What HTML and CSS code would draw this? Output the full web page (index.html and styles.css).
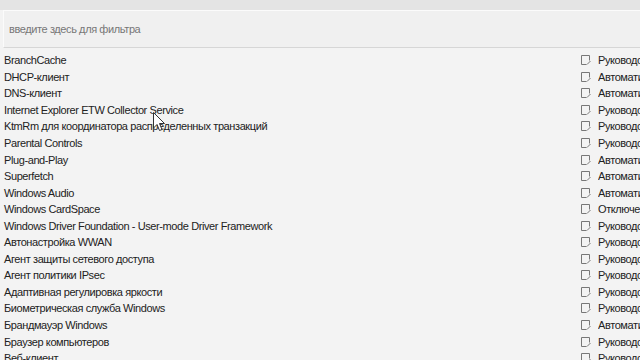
FILE: index.html
```html
<!DOCTYPE html>
<html>
<head>
<meta charset="utf-8">
<link rel="stylesheet" href="styles.css">
</head>
<body>
<div class="topbar"></div>
<div class="filter"><span class="placeholder">введите здесь для фильтра</span></div>
<div class="list">
  <div class="row"><span class="name">BranchCache</span><span class="start"><svg class="ico" viewBox="0 0 10 10"><path d="M0.5 0.5H8.5V5.5M5.5 9.5H0.5V0.5" fill="none" stroke="#777"/><path d="M6 9.5L9.5 6" stroke="#777"/></svg><span class="stxt">Руководство</span></span></div>
  <div class="row"><span class="name">DHCP-клиент</span><span class="start"><svg class="ico" viewBox="0 0 10 10"><path d="M0.5 0.5H8.5V5.5M5.5 9.5H0.5V0.5" fill="none" stroke="#777"/><path d="M6 9.5L9.5 6" stroke="#777"/></svg><span class="stxt">Автоматически</span></span></div>
  <div class="row"><span class="name">DNS-клиент</span><span class="start"><svg class="ico" viewBox="0 0 10 10"><path d="M0.5 0.5H8.5V5.5M5.5 9.5H0.5V0.5" fill="none" stroke="#777"/><path d="M6 9.5L9.5 6" stroke="#777"/></svg><span class="stxt">Автоматически</span></span></div>
  <div class="row"><span class="name">Internet Explorer ETW Collector Service</span><span class="start"><svg class="ico" viewBox="0 0 10 10"><path d="M0.5 0.5H8.5V5.5M5.5 9.5H0.5V0.5" fill="none" stroke="#777"/><path d="M6 9.5L9.5 6" stroke="#777"/></svg><span class="stxt">Руководство</span></span></div>
  <div class="row"><span class="name">KtmRm для координатора распределенных транзакций</span><span class="start"><svg class="ico" viewBox="0 0 10 10"><path d="M0.5 0.5H8.5V5.5M5.5 9.5H0.5V0.5" fill="none" stroke="#777"/><path d="M6 9.5L9.5 6" stroke="#777"/></svg><span class="stxt">Руководство</span></span></div>
  <div class="row"><span class="name">Parental Controls</span><span class="start"><svg class="ico" viewBox="0 0 10 10"><path d="M0.5 0.5H8.5V5.5M5.5 9.5H0.5V0.5" fill="none" stroke="#777"/><path d="M6 9.5L9.5 6" stroke="#777"/></svg><span class="stxt">Руководство</span></span></div>
  <div class="row"><span class="name">Plug-and-Play</span><span class="start"><svg class="ico" viewBox="0 0 10 10"><path d="M0.5 0.5H8.5V5.5M5.5 9.5H0.5V0.5" fill="none" stroke="#777"/><path d="M6 9.5L9.5 6" stroke="#777"/></svg><span class="stxt">Автоматически</span></span></div>
  <div class="row"><span class="name">Superfetch</span><span class="start"><svg class="ico" viewBox="0 0 10 10"><path d="M0.5 0.5H8.5V5.5M5.5 9.5H0.5V0.5" fill="none" stroke="#777"/><path d="M6 9.5L9.5 6" stroke="#777"/></svg><span class="stxt">Автоматически</span></span></div>
  <div class="row"><span class="name">Windows Audio</span><span class="start"><svg class="ico" viewBox="0 0 10 10"><path d="M0.5 0.5H8.5V5.5M5.5 9.5H0.5V0.5" fill="none" stroke="#777"/><path d="M6 9.5L9.5 6" stroke="#777"/></svg><span class="stxt">Автоматически</span></span></div>
  <div class="row"><span class="name">Windows CardSpace</span><span class="start"><svg class="ico" viewBox="0 0 10 10"><path d="M0.5 0.5H8.5V5.5M5.5 9.5H0.5V0.5" fill="none" stroke="#777"/><path d="M6 9.5L9.5 6" stroke="#777"/></svg><span class="stxt">Отключена</span></span></div>
  <div class="row"><span class="name">Windows Driver Foundation - User-mode Driver Framework</span><span class="start"><svg class="ico" viewBox="0 0 10 10"><path d="M0.5 0.5H8.5V5.5M5.5 9.5H0.5V0.5" fill="none" stroke="#777"/><path d="M6 9.5L9.5 6" stroke="#777"/></svg><span class="stxt">Руководство</span></span></div>
  <div class="row"><span class="name">Автонастройка WWAN</span><span class="start"><svg class="ico" viewBox="0 0 10 10"><path d="M0.5 0.5H8.5V5.5M5.5 9.5H0.5V0.5" fill="none" stroke="#777"/><path d="M6 9.5L9.5 6" stroke="#777"/></svg><span class="stxt">Руководство</span></span></div>
  <div class="row"><span class="name">Агент защиты сетевого доступа</span><span class="start"><svg class="ico" viewBox="0 0 10 10"><path d="M0.5 0.5H8.5V5.5M5.5 9.5H0.5V0.5" fill="none" stroke="#777"/><path d="M6 9.5L9.5 6" stroke="#777"/></svg><span class="stxt">Руководство</span></span></div>
  <div class="row"><span class="name">Агент политики IPsec</span><span class="start"><svg class="ico" viewBox="0 0 10 10"><path d="M0.5 0.5H8.5V5.5M5.5 9.5H0.5V0.5" fill="none" stroke="#777"/><path d="M6 9.5L9.5 6" stroke="#777"/></svg><span class="stxt">Руководство</span></span></div>
  <div class="row"><span class="name">Адаптивная регулировка яркости</span><span class="start"><svg class="ico" viewBox="0 0 10 10"><path d="M0.5 0.5H8.5V5.5M5.5 9.5H0.5V0.5" fill="none" stroke="#777"/><path d="M6 9.5L9.5 6" stroke="#777"/></svg><span class="stxt">Руководство</span></span></div>
  <div class="row"><span class="name">Биометрическая служба Windows</span><span class="start"><svg class="ico" viewBox="0 0 10 10"><path d="M0.5 0.5H8.5V5.5M5.5 9.5H0.5V0.5" fill="none" stroke="#777"/><path d="M6 9.5L9.5 6" stroke="#777"/></svg><span class="stxt">Руководство</span></span></div>
  <div class="row"><span class="name">Брандмауэр Windows</span><span class="start"><svg class="ico" viewBox="0 0 10 10"><path d="M0.5 0.5H8.5V5.5M5.5 9.5H0.5V0.5" fill="none" stroke="#777"/><path d="M6 9.5L9.5 6" stroke="#777"/></svg><span class="stxt">Автоматически</span></span></div>
  <div class="row"><span class="name">Браузер компьютеров</span><span class="start"><svg class="ico" viewBox="0 0 10 10"><path d="M0.5 0.5H8.5V5.5M5.5 9.5H0.5V0.5" fill="none" stroke="#777"/><path d="M6 9.5L9.5 6" stroke="#777"/></svg><span class="stxt">Руководство</span></span></div>
  <div class="row"><span class="name">Веб-клиент</span><span class="start"><svg class="ico" viewBox="0 0 10 10"><path d="M0.5 0.5H8.5V5.5M5.5 9.5H0.5V0.5" fill="none" stroke="#777"/><path d="M6 9.5L9.5 6" stroke="#777"/></svg><span class="stxt">Руководство</span></span></div>
</div>
<svg class="cursor" viewBox="0 0 12 20" width="12" height="20"><path d="M0.5 0.5V16L4 12.5L6.5 18.5L9 17.5L6.5 11.5H11.5Z" fill="#fff" stroke="#333" stroke-width="1"/></svg>
</body>
</html>
```
FILE: styles.css
```css
html, body {
  margin: 0;
  padding: 0;
}
body {
  width: 640px;
  height: 360px;
  overflow: hidden;
  background: #f3f3f3;
  font-family: "Liberation Sans", Arial, sans-serif;
  font-size: 11px;
  letter-spacing: -0.4px;
  color: #222;
  position: relative;
}
.topbar {
  height: 10px;
  background: #e4e4e4;
}
.filter {
  margin-left: 3px;
  height: 36px;
  background: #f0f0f0;
  border-top: 1px solid #fbfbfb;
  border-left: 1px solid #fbfbfb;
  border-bottom: 1px solid #d6d6d6;
  display: flex;
  align-items: center;
  padding-left: 5px;
}
.placeholder {
  color: #777;
  font-size: 11px;
}
.list {
  padding-top: 4px;
}
.row {
  height: 16.55px;
  display: flex;
  align-items: center;
  white-space: nowrap;
}
.name {
  padding-left: 4px;
  width: 577px;
  flex: none;
  overflow: hidden;
}
.start {
  display: flex;
  align-items: center;
  gap: 7px;
  width: 59px;
  flex: none;
  overflow: hidden;
}
.ico {
  width: 10px;
  height: 10px;
  flex: none;
}
.stxt {
  overflow: hidden;
  white-space: nowrap;
  text-overflow: clip;
}
.cursor {
  position: absolute;
  left: 153px;
  top: 112px;
}
```
